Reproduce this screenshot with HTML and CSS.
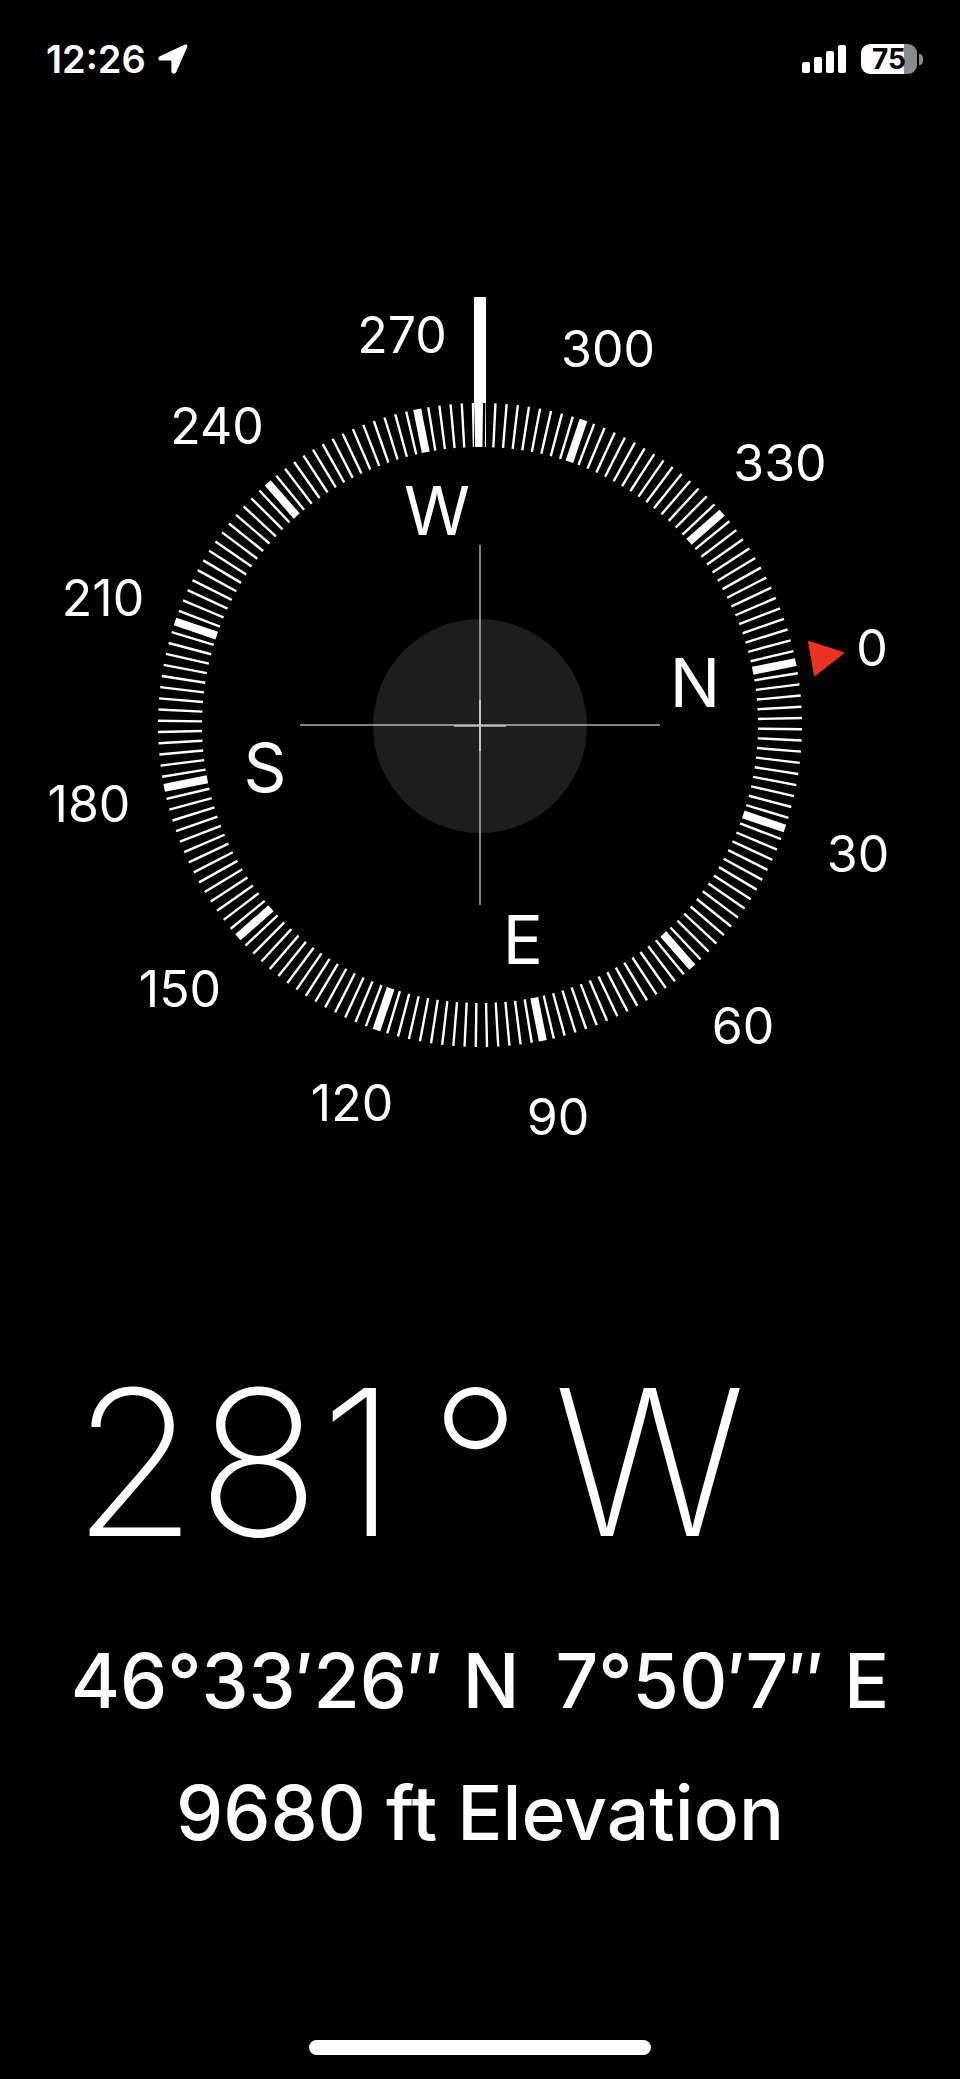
FILE: index.html
```html
<!DOCTYPE html>
<html lang="en">
<head>
<meta charset="utf-8">
<meta name="viewport" content="width=device-width, initial-scale=1">
<title>Compass</title>
<link rel="stylesheet" href="styles.css">
</head>
<body>
<header class="status">
  <div class="status-group">
    <time class="clock">12:26</time>
    <svg class="location" viewBox="0 0 30 30" aria-hidden="true"><path d="M1.800 12.300 26.600.800c1.900-.8 3.300.6 2.500 2.500L18.200 28.300c-.9 2.100-4.800 1.900-4.800-.8V17.800a1.200 1.200 0 0 0-1.200-1.200H2.700c-2.900 0-3.300-3.300-.9-4.300z"/></svg>
  </div>
  <div class="status-group">
    <svg class="signal" viewBox="0 0 45 28" aria-hidden="true"><rect x="0" y="17" width="8" height="11" rx="2"/><rect x="12" y="12" width="8" height="16" rx="2"/><rect x="24" y="6" width="8" height="22" rx="2"/><rect x="36" y="0" width="8" height="28" rx="2"/></svg>
    <div class="battery"><span class="battery-level">75</span></div>
  </div>
</header>

<main class="compass">
  <svg class="dial" viewBox="-480 -440 960 880" role="img" aria-label="Compass dial, heading 281 degrees west">
    <defs>
      <path id="tick" d="M0-322V-278"/>
      <g id="sector">
        <path class="major" d="M0-322V-278"/>
        <use href="#tick" transform="rotate(2)"/><use href="#tick" transform="rotate(4)"/>
        <use href="#tick" transform="rotate(6)"/><use href="#tick" transform="rotate(8)"/>
        <use href="#tick" transform="rotate(10)"/><use href="#tick" transform="rotate(12)"/>
        <use href="#tick" transform="rotate(14)"/><use href="#tick" transform="rotate(16)"/>
        <use href="#tick" transform="rotate(18)"/><use href="#tick" transform="rotate(20)"/>
        <use href="#tick" transform="rotate(22)"/><use href="#tick" transform="rotate(24)"/>
        <use href="#tick" transform="rotate(26)"/><use href="#tick" transform="rotate(28)"/>
      </g>
    </defs>
    <circle class="level" cy="1" r="107"/>
    <path class="cross" d="M-180 0H180M0-180V180"/>
    <path class="cross" d="M-26 1H26M0-25V26"/>
    <g class="ticks" transform="rotate(78.75)">
      <use href="#sector"/>
      <use href="#sector" transform="rotate(30)"/>
      <use href="#sector" transform="rotate(60)"/>
      <use href="#sector" transform="rotate(90)"/>
      <use href="#sector" transform="rotate(120)"/>
      <use href="#sector" transform="rotate(150)"/>
      <use href="#sector" transform="rotate(180)"/>
      <use href="#sector" transform="rotate(210)"/>
      <use href="#sector" transform="rotate(240)"/>
      <use href="#sector" transform="rotate(270)"/>
      <use href="#sector" transform="rotate(300)"/>
      <use href="#sector" transform="rotate(330)"/>
    </g>
    <path class="lubber" d="M0-428V-278"/>
    <path class="north" d="M329-83 363-72 335-50z"/>
    <g class="degrees">
      <text x="392" y="-59">0</text>
      <text x="378" y="147">30</text>
      <text x="263" y="319">60</text>
      <text x="78" y="410">90</text>
      <text x="-128" y="396">120</text>
      <text x="-300" y="282">150</text>
      <text x="-391" y="97">180</text>
      <text x="-377" y="-109">210</text>
      <text x="-263" y="-281">240</text>
      <text x="-78" y="-372">270</text>
      <text x="128" y="-358">300</text>
      <text x="300" y="-244">330</text>
    </g>
    <g class="cardinals">
      <text x="215" y="-18">N</text>
      <text x="43" y="239">E</text>
      <text x="-215" y="67">S</text>
      <text x="-43" y="-190">W</text>
    </g>
  </svg>

  <h1 class="heading"><span>281</span><span>°</span> <span>W</span></h1>
  <p class="reading coordinates"><span>46°33′26″ N</span><span>7°50′7″ E</span></p>
  <p class="reading">9680 ft Elevation</p>
</main>

<footer class="home"><div class="home-bar"></div></footer>
</body>
</html>
```
FILE: styles.css
```css
* { box-sizing: border-box; }

body {
  margin: 0;
  min-height: 100vh;
  display: flex;
  flex-direction: column;
  background: #000;
  color: #fff;
  font-family: Inter, "Liberation Sans", sans-serif;
}

.status {
  display: flex;
  justify-content: space-between;
  align-items: center;
  height: 118px;
  padding: 0 36px 0 46px;
}

.status-group {
  display: flex;
  align-items: center;
  gap: 12px;
}

.clock {
  font-size: 38px;
  font-weight: 600;
  line-height: 44px;
}

.location { width: 30px; height: 30px; fill: #fff; }
.signal { width: 45px; height: 28px; margin-right: 2px; fill: #fff; }

.battery {
  position: relative;
  width: 56px;
  height: 30px;
  margin-right: 7px;
  border-radius: 9px;
  background: linear-gradient(90deg, #fff 43px, #8a8a8a 43px);
  color: #000;
  text-align: center;
}

.battery::after {
  content: "";
  position: absolute;
  left: 58px;
  top: 10px;
  width: 4px;
  height: 11px;
  border-radius: 0 4px 4px 0;
  background: #8a8a8a;
}

.battery-level {
  display: block;
  font-size: 28px;
  font-weight: 700;
  line-height: 30px;
}

.compass {
  display: flex;
  flex-direction: column;
}

.dial {
  display: block;
  width: 100%;
  margin-top: 167px;
  isolation: isolate;
}

.level { fill: #1e1e1e; }
.cross { stroke: rgba(255, 255, 255, 0.5); stroke-width: 2; }
.ticks { stroke: #fff; stroke-width: 2.4; }
.major { stroke-width: 8; }
.lubber { stroke: #fff; stroke-width: 12; mix-blend-mode: difference; }
.north { fill: #eb3323; stroke: #eb3323; stroke-width: 2; stroke-linejoin: round; }
.degrees, .cardinals { fill: #fff; text-anchor: middle; }
.degrees { font-size: 50px; font-weight: 400; }
.cardinals { font-size: 67px; font-weight: 400; }

.heading {
  display: flex;
  gap: 32px;
  margin: 177px 0 0;
  padding-left: 72px;
  font-size: 203px;
  font-weight: 200;
  line-height: 240px;
  white-space: nowrap;
}

.reading {
  margin: 32px 0 0;
  font-size: 75px;
  font-weight: 500;
  line-height: 100px;
  text-align: center;
  white-space: nowrap;
}

.coordinates {
  display: flex;
  justify-content: center;
  gap: 36px;
  margin-top: 49px;
}

.home {
  display: flex;
  justify-content: center;
  margin-top: auto;
  padding-bottom: 24px;
}

.home-bar {
  width: 342px;
  height: 15px;
  border-radius: 8px;
  background: #fff;
}
```
